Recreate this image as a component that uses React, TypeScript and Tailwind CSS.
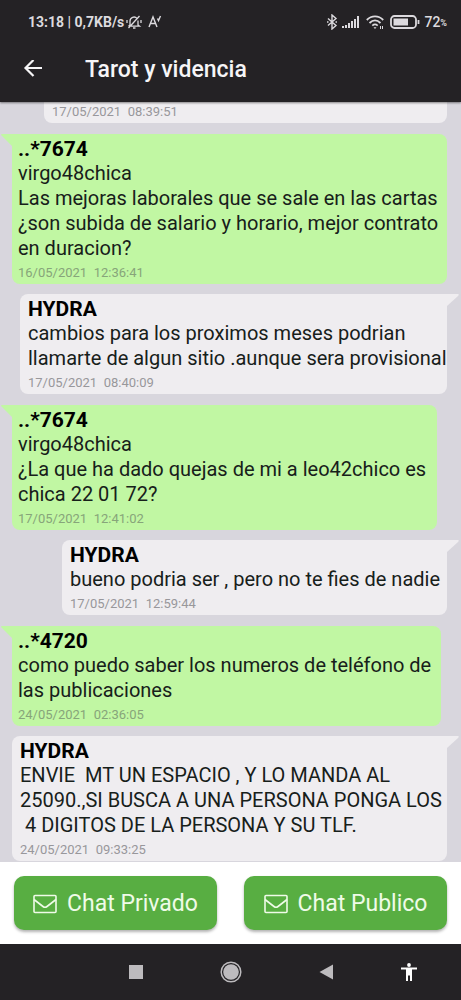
import React from 'react';

interface Message {
  author?: string;
  text?: string;
  date: string;
  mine?: boolean;
  margin: string;
}

const messages: Message[] = [
  {
    date: '17/05/2021  08:39:51',
    mine: true,
    margin: 'ml-11 mr-3.5',
  },
  {
    author: '..*7674',
    text: 'virgo48chica\nLas mejoras laborales que se sale en las cartas\n¿son subida de salario y horario, mejor contrato\nen duracion?',
    date: '16/05/2021  12:36:41',
    margin: 'ml-3 mr-3.5 mt-[11px]',
  },
  {
    author: 'HYDRA',
    text: 'cambios para los proximos meses podrian\nllamarte de algun sitio .aunque sera provisional',
    date: '17/05/2021  08:40:09',
    mine: true,
    margin: 'ml-5 mr-3.5 mt-2.5',
  },
  {
    author: '..*7674',
    text: 'virgo48chica\n¿La que ha dado quejas de mi a leo42chico es\nchica 22 01 72?',
    date: '17/05/2021  12:41:02',
    margin: 'ml-3 mr-6 mt-[11px]',
  },
  {
    author: 'HYDRA',
    text: 'bueno podria ser , pero no te fies de nadie',
    date: '17/05/2021  12:59:44',
    mine: true,
    margin: 'ml-[62px] mr-3.5 mt-2.5',
  },
  {
    author: '..*4720',
    text: 'como puedo saber los numeros de teléfono de\nlas publicaciones',
    date: '24/05/2021  02:36:05',
    margin: 'ml-3 mr-5 mt-[11px]',
  },
  {
    author: 'HYDRA',
    text: 'ENVIE  MT UN ESPACIO , Y LO MANDA AL\n25090.,SI BUSCA A UNA PERSONA PONGA LOS\n 4 DIGITOS DE LA PERSONA Y SU TLF.',
    date: '24/05/2021  09:33:25',
    mine: true,
    margin: 'ml-3 mr-3.5 mt-2.5',
  },
];

const Bubble = ({ author, text, date, mine, margin }: Message) => {
  return (
    <article
      className={`relative shrink-0 rounded-b-lg whitespace-pre ${margin} ${
        mine ? 'bg-[#efedf0] pl-2' : 'bg-[#c1f7a3] pl-1.5'
      } ${author ? 'pt-[3px]' : 'pt-px'} ${author && mine ? 'rounded-tl-lg' : ''} ${mine ? '' : 'rounded-tr-lg'}`}
    >
      {author && mine && (
        <svg className="absolute top-0 left-full h-3 w-3" viewBox="0 0 12 12" fill="#efedf0" aria-hidden="true">
          <path d="M0 0H11Q12.500 .5 11 2L0 12Z" />
        </svg>
      )}
      {author && !mine && (
        <svg className="absolute top-0 right-full h-3 w-3" viewBox="0 0 12 12" fill="#c1f7a3" aria-hidden="true">
          <path d="M12 0H2Q0 .5 2 2L12 12Z" />
        </svg>
      )}
      {author && <h2 className="text-[21px] leading-6 font-bold text-black">{author}</h2>}
      {text && <p className="text-[20px] leading-[25px] text-[#17201a]">{text}</p>}
      <time className={`block text-[13px] leading-[23px] ${mine ? 'text-[#98979b]' : 'text-[#87a57a]'}`}>{date}</time>
    </article>
  );
};

const StatusBar = () => {
  return (
    <div className="flex h-11 items-center pr-3.5 pl-7 text-[14px] text-[#dcdade]">
      <span className="font-bold whitespace-pre">13:18 | 0,7KB/s</span>
      <svg className="ml-0.5 h-4 w-4" viewBox="0 0 16 16" fill="none" stroke="currentColor" strokeWidth="1.3" aria-hidden="true">
        <path d="M4 11V7a4 4 0 0 1 7-2.600M12 6.500V11l1.500 1.200H5M7 14h2.500M2.500 14 13.500 2M1 6v3M15 6v3M2.500 12.200 4 11" />
      </svg>
      <svg className="ml-1.5 h-4 w-4" viewBox="0 0 16 16" fill="none" stroke="currentColor" strokeWidth="1.4" aria-hidden="true">
        <path d="M1 13 5 3 9 13M2.500 9.500H7.500M9.500 4.500l1 2L12.500 2" />
      </svg>
      <div className="ml-auto flex items-center">
        <svg className="h-4 w-3" viewBox="0 0 12 16" fill="none" stroke="currentColor" strokeWidth="1.4" aria-hidden="true">
          <path d="M2 4.500 10 11.500 6 15V1l4 3.500L2 11.500M1 8h1.500M9.500 8H11" />
        </svg>
        <svg className="ml-1 h-3.5 w-[18px]" viewBox="0 0 18 14" fill="currentColor" aria-hidden="true">
          <path d="M0 11h2v2H0zM3 10h2v3H3zM6 8h2v5H6zM9 6h2v7H9zM12 4h2v9h-2zM15 1h2v12h-2z" />
        </svg>
        <svg className="ml-1.5 h-4 w-[18px]" viewBox="0 0 18 16" fill="none" stroke="currentColor" strokeWidth="1.8" aria-hidden="true">
          <path d="M.8 6C5.500 1.200 12.500 1.200 17.200 6M3.500 9C7 5.600 11 5.600 14.500 9M6.300 11.600c1.700-1.500 3.700-1.500 5.400 0" />
          <path d="M7.500 13.200h3L9 15z" fill="currentColor" stroke="none" />
          <path d="M14.500 12v3M16.500 12v3" strokeWidth="1" />
        </svg>
        <svg className="ml-1.5 h-3.5 w-[30px]" viewBox="0 0 30 14" fill="none" stroke="currentColor" aria-hidden="true">
          <rect x="1" y="1" width="25" height="12" rx="3.500" strokeWidth="1.800" />
          <path d="M3.500 3.500h14.500v7H3.500z" fill="currentColor" stroke="none" />
          <path d="M28.500 5v4" strokeWidth="1.800" />
        </svg>
        <span className="ml-1 font-medium">72</span>
        <span className="pt-1 text-[9px] font-bold">%</span>
      </div>
    </div>
  );
};

const ChatButton = ({ label }: { label: string }) => {
  return (
    <button
      type="button"
      className="flex h-[54px] flex-1 items-center justify-center gap-2.5 rounded-[10px] bg-[#58ae42] pt-0.5 text-[23px] text-[#effbe8] shadow-[0_2px_3px_rgba(0,0,0,0.3)]"
    >
      <svg className="h-5 w-6" viewBox="0 0 24 20" fill="none" stroke="currentColor" strokeWidth="1.6" aria-hidden="true">
        <rect x="1" y="1.500" width="22" height="17" rx="1" />
        <path d="M1 5.500 10 12.500Q12 14 14 12.500L23 5.500" />
      </svg>
      {label}
    </button>
  );
};

export default function App() {
  return (
    <div className="flex h-screen flex-col overflow-hidden bg-white font-['Roboto',sans-serif]">
      <header className="z-10 shrink-0 bg-[#242225] pb-1.5 shadow-[0_1px_2px_rgba(0,0,0,0.45)]">
        <StatusBar />
        <div className="flex h-[52px] items-center pl-[23px] text-[#f6f5f7]">
          <button type="button" aria-label="Volver">
            <svg className="h-5 w-5" viewBox="0 0 20 20" fill="none" stroke="currentColor" strokeWidth="2.200" aria-hidden="true">
              <path d="M19 8H2.500M10.500 0 2.500 8 10.500 16" />
            </svg>
          </button>
          <h1 className="ml-[42px] text-[23px] font-medium">Tarot y videncia</h1>
        </div>
      </header>

      <main className="flex min-h-0 flex-1 flex-col justify-end overflow-hidden bg-[#d8d6dd] pb-px">
        {messages.map((message) => (
          <Bubble key={message.date} {...message} />
        ))}
      </main>

      <div className="flex shrink-0 gap-[27px] p-3.5">
        <ChatButton label="Chat Privado" />
        <ChatButton label="Chat Publico" />
      </div>

      <nav className="grid h-14 shrink-0 grid-cols-[1fr_auto_1fr] items-center bg-[#242225] text-[#bdbbbe]">
        <div className="col-start-2 flex items-center gap-[77px]">
          <button type="button" aria-label="Recientes">
            <svg className="h-3.5 w-3.5" viewBox="0 0 14 14" fill="currentColor" aria-hidden="true">
              <path d="M0 0h14v14H0z" />
            </svg>
          </button>
          <button type="button" aria-label="Inicio">
            <svg className="h-[22px] w-[22px]" viewBox="0 0 22 22" fill="currentColor" aria-hidden="true">
              <circle cx="11" cy="11" r="9.800" fill="none" stroke="currentColor" strokeWidth="1.500" />
              <circle cx="11" cy="11" r="7.800" />
            </svg>
          </button>
          <button type="button" aria-label="Atrás">
            <svg className="h-4 w-3.5" viewBox="0 0 14 16" fill="currentColor" aria-hidden="true">
              <path d="M14 .5v15L.5 8z" />
            </svg>
          </button>
        </div>
        <button type="button" aria-label="Accesibilidad" className="mr-11 justify-self-end text-white">
          <svg className="h-[18px] w-4" viewBox="0 0 16 18" fill="currentColor" aria-hidden="true">
            <circle cx="8" cy="2" r="1.900" />
            <path d="M0 4.500h16v2h-5V18H9v-5.500H7V18H5V6.500H0z" />
          </svg>
        </button>
      </nav>
    </div>
  );
}
